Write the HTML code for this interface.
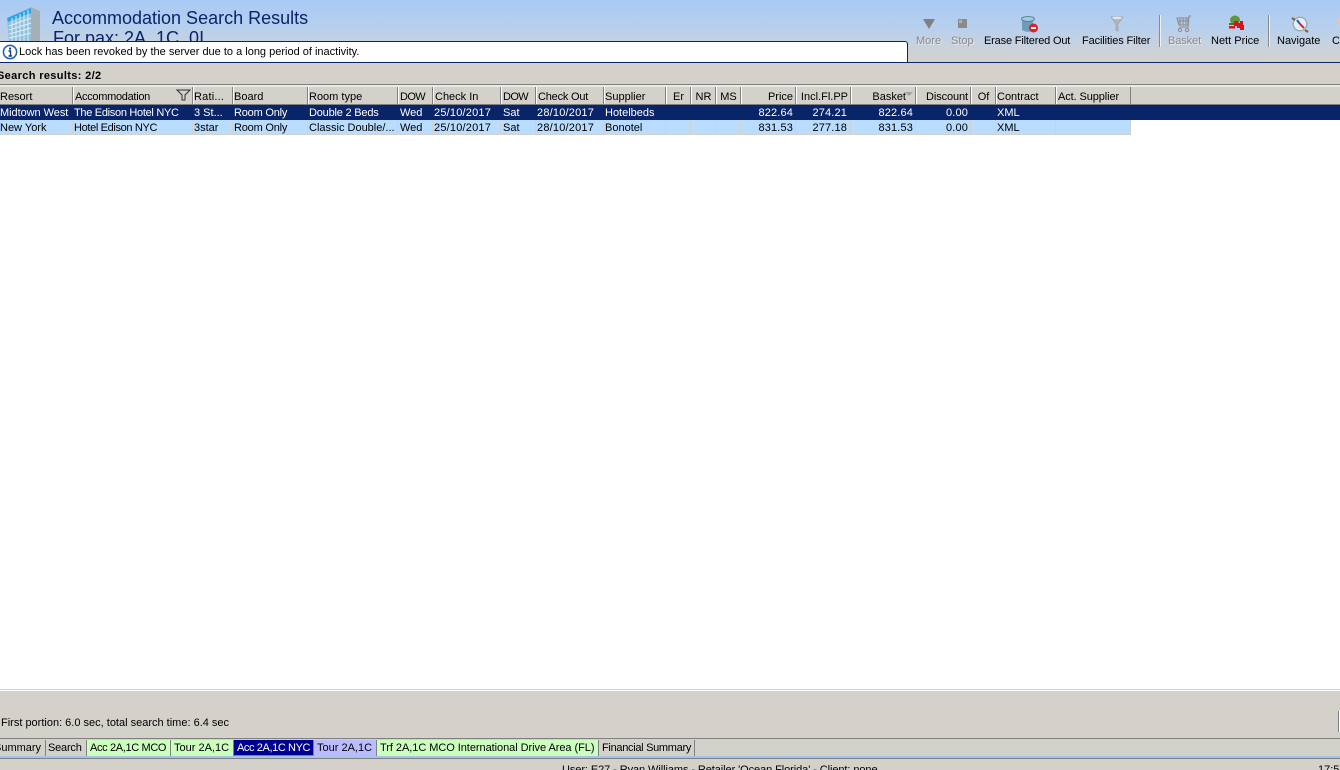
<!DOCTYPE html>
<html><head><meta charset="utf-8"><style>
html,body{margin:0;padding:0;background:#fff}
#p{position:relative;width:1340px;height:770px;overflow:hidden;background:#fff;font:11px/14px "Liberation Sans",sans-serif;color:#000;letter-spacing:0}
#p div{position:absolute}
.t{position:absolute;white-space:nowrap}
#p span.t{line-height:15px}
.h{top:87px;height:17px;background:#d4d1cb;border-right:1px solid #808080;border-left:1px solid #fff;box-sizing:border-box;line-height:20px;padding-left:0;white-space:nowrap;overflow:hidden}
.r{text-align:right;padding-right:2px;padding-left:0}
.c{text-align:center;padding:0}
.dis{color:#8a8a8a;text-shadow:1px 1px 0 #e8e8e8}
.tab{top:740px;height:16px;line-height:16px;box-sizing:border-box;white-space:nowrap;border-right:1px solid #808080;padding-left:3px;overflow:hidden}
.g{top:120px;width:1px;height:14px;background:#d4d1cb}
</style></head><body><div id="p">
<div style="left:0;top:0;width:1340px;height:62px;background:linear-gradient(#a8caf5 0,#b5cfee 25px,#c4d2e2 42px,#d4d1cb 62px)"></div>
<svg style="position:absolute;left:6px;top:6px" width="35" height="36" viewBox="0 0 35 36"><path d="M1 12L25 1V36H3z" fill="#8fc0de"/><path d="M25 1l9 4V36H25z" fill="#a4b0b8"/><path d="M1 12L25 2v5L2 16z" fill="#2aa6e6"/><g stroke="#eef6fb" stroke-width="1" opacity=".85"><path d="M6 12V36M10 10V36M14 8V36M18 6V36M22 4V36"/><path d="M3 20L25 12M3 24L25 17M3 28L25 22M3 32L25 27"/></g></svg>
<div class="t" style="left:52px;top:9px;font-size:18px;line-height:18px;color:#0a246a">Accommodation Search Results</div>
<div class="t" style="left:53px;top:29px;font-size:18px;line-height:18px;color:#0a246a">For pax: 2A, 1C, 0I</div>
<div style="left:0;top:41px;width:908px;height:21px;background:#fff;border-top:1px solid #0a246a;border-right:1px solid #0a246a;border-top-right-radius:3px;box-sizing:border-box"></div>
<svg style="position:absolute;left:2px;top:44px" width="16" height="16" viewBox="0 0 16 16"><circle cx="8" cy="8" r="6.6" fill="#fff" stroke="#1a5fa8" stroke-width="1.5"/><path d="M6.5 7h2v4.5M6.5 12h3.5" stroke="#0a3d8a" stroke-width="1.4" fill="none"/><rect x="7" y="3.6" width="2" height="2" fill="#0a3d8a"/></svg>
<div class="t" style="left:19px;top:45px">Lock has been revoked by the server due to a long period of inactivity.</div>
<div style="left:0;top:62px;width:1340px;height:1px;background:#0a246a"></div>
<div style="left:0;top:63px;width:1340px;height:21px;background:#d4d1cb"></div>
<div class="t" style="left:-3px;top:69px;font-weight:bold;letter-spacing:.35px">Search results: 2/2</div>
<div style="left:0;top:84px;width:1340px;height:1px;background:#808080"></div>
<div style="left:0;top:85px;width:1340px;height:2px;background:#ece9e2"></div>
<div style="left:0;top:87px;width:1340px;height:17px;background:#d4d1cb"></div>
<div style="left:0;top:104px;width:1340px;height:1px;background:#808080"></div>

<svg style="position:absolute;left:922px;top:18px" width="14" height="12"><path d="M1 1H13L7 11z" fill="#808080"/></svg>
<svg style="position:absolute;left:958px;top:19px" width="9" height="9"><rect width="9" height="9" fill="#8a8a8a"/><rect x="1" y="1" width="3" height="3" fill="#b0b0b0"/></svg>
<svg style="position:absolute;left:1021px;top:16px" width="18" height="17"><path d="M1 3v11q5 3 11 1V3z" fill="#6e9cba"/><ellipse cx="7" cy="3" rx="6.500" ry="2.500" fill="#a9c9dc" stroke="#5a8099"/><circle cx="12.500" cy="12" r="4.500" fill="#d8242a"/><rect x="10" y="11" width="5" height="2" fill="#fff"/></svg>
<svg style="position:absolute;left:1110px;top:16px" width="14" height="16"><path d="M1 1H13L8 8V15L6 14V8z" fill="#b4b4b4" stroke="#a0a0a0" stroke-width=".7"/><ellipse cx="7" cy="2" rx="5" ry="1.200" fill="#e4e4e4"/></svg>
<div style="left:1159px;top:15px;width:1px;height:32px;background:#8a8a8a"></div><div style="left:1160px;top:15px;width:1px;height:32px;background:#f0f0f0"></div>
<svg style="position:absolute;left:1176px;top:15px" width="17" height="18"><path d="M1 3H12V10H3z M4 3V10M7 3V10M10 3V10M2 6H12M15 1H13L12 12H3" fill="none" stroke="#8c8c8c" stroke-width="1.100"/><circle cx="4" cy="15" r="1.600" fill="none" stroke="#8c8c8c"/><circle cx="11" cy="15" r="1.600" fill="none" stroke="#8c8c8c"/></svg>
<svg style="position:absolute;left:1228px;top:15px" width="17" height="17"><ellipse cx="7" cy="5" rx="5" ry="4.500" fill="#5a9a3c"/><rect x="1" y="8" width="7" height="2" fill="#3b7a2a"/><path d="M6 6h4v2h2V6h3v4h1v5H12v-2H9v-2H6z" fill="#e0101a"/><rect x="1" y="11" width="6" height="2.500" fill="#e0101a"/></svg>
<div style="left:1268px;top:15px;width:1px;height:32px;background:#8a8a8a"></div><div style="left:1269px;top:15px;width:1px;height:32px;background:#f0f0f0"></div>
<svg style="position:absolute;left:1291px;top:15px" width="18" height="18"><circle cx="9" cy="9" r="6.800" fill="#e6eef6" stroke="#9aa8b6" stroke-width="1.400"/><path d="M6 5L9 9" stroke="#2a58b8" stroke-width="2"/><path d="M9 9L13 13" stroke="#e0242a" stroke-width="2"/><path d="M1 3l3 2M14 15l3 2" stroke="#8a5a2a" stroke-width="2"/></svg>
<div style="left:1338px;top:17px;width:2px;height:8px;background:#ecc0c0"></div>

<div class="t dis" style="left:916px;top:34px">More</div>
<div class="t dis" style="left:951px;top:34px">Stop</div>
<div class="t" style="left:984px;top:34px;letter-spacing:-.17px">Erase Filtered Out</div>
<div class="t" style="left:1082px;top:34px;letter-spacing:-.12px">Facilities Filter</div>
<div class="t dis" style="left:1168px;top:34px;letter-spacing:-.1px">Basket</div>
<div class="t" style="left:1211px;top:34px">Nett Price</div>
<div class="t" style="left:1277px;top:34px">Navigate</div>
<div class="t" style="left:1332px;top:34px">Cl</div>

<div class="h" style="left:-1px;width:74px">Resort</div>
<div class="h" style="left:73px;width:120px;letter-spacing:-.3px;padding-left:1px">Accommodation</div>
<svg style="position:absolute;left:176px;top:89px" width="15" height="12"><path d="M1 1H14L9 6V11H6V6z" fill="none" stroke="#333" stroke-width="1"/></svg>
<div class="h" style="left:193px;width:40px;letter-spacing:.2px">Rati...</div>
<div class="h" style="left:233px;width:75px">Board</div>
<div class="h" style="left:308px;width:90px">Room type</div>
<div class="h" style="left:398px;width:35px;letter-spacing:-.6px;padding-left:1px">DOW</div>
<div class="h" style="left:433px;width:68px;padding-left:1px">Check In</div>
<div class="h" style="left:501px;width:35px;letter-spacing:-.6px;padding-left:1px">DOW</div>
<div class="h" style="left:536px;width:68px;letter-spacing:-.2px;padding-left:1px">Check Out</div>
<div class="h" style="left:604px;width:62px">Supplier</div>
<div class="h c" style="left:666px;width:25px">Er</div>
<div class="h c" style="left:691px;width:25px">NR</div>
<div class="h c" style="left:716px;width:25px">MS</div>
<div class="h r" style="left:741px;width:55px">Price</div>
<div class="h r" style="left:796px;width:55px">Incl.Fl.PP</div>
<div class="h r" style="left:851px;width:65px;padding-right:9px">Basket</div>
<svg style="position:absolute;left:905px;top:92px" width="8" height="5"><path d="M0 0H8L4 4z" fill="#a0a0a0"/></svg>
<div class="h r" style="left:916px;width:55px;letter-spacing:-.1px">Discount</div>
<div class="h c" style="left:971px;width:25px">Of</div>
<div class="h" style="left:996px;width:60px">Contract</div>
<div class="h" style="left:1056px;width:75px;letter-spacing:-.1px;padding-left:1px">Act. Supplier</div>

<div style="left:0;top:105px;width:1340px;height:15px;background:#0a246a"></div>
<div style="left:0;top:120px;width:1131px;height:14px;background:#b9dcff"></div>
<div style="left:0;top:134px;width:1131px;height:1px;background:#d4d1cb"></div>
<div class="g" style="left:72px"></div><div class="g" style="left:192px"></div><div class="g" style="left:232px"></div><div class="g" style="left:307px"></div><div class="g" style="left:397px"></div><div class="g" style="left:432px"></div><div class="g" style="left:500px"></div><div class="g" style="left:535px"></div><div class="g" style="left:603px"></div><div class="g" style="left:665px"></div><div class="g" style="left:690px"></div><div class="g" style="left:715px"></div><div class="g" style="left:740px"></div><div class="g" style="left:795px"></div><div class="g" style="left:850px"></div><div class="g" style="left:915px"></div><div class="g" style="left:970px"></div><div class="g" style="left:995px"></div><div class="g" style="left:1055px"></div><div class="g" style="left:1130px"></div>

<div style="left:0;top:106px;width:1340px;height:15px;color:#fff">
<span class="t" style="left:0;top:0;letter-spacing:-.05px">Midtown West</span><span class="t" style="left:74px;top:0;letter-spacing:-.3px">The Edison Hotel NYC</span><span class="t" style="left:194px;top:0">3 St...</span><span class="t" style="left:234px;top:0;letter-spacing:-.2px">Room Only</span><span class="t" style="left:309px;top:0;letter-spacing:-.2px">Double 2 Beds</span><span class="t" style="left:400px;top:0">Wed</span><span class="t" style="left:434px;top:0;letter-spacing:.2px">25/10/2017</span><span class="t" style="left:503px;top:0">Sat</span><span class="t" style="left:537px;top:0;letter-spacing:.2px">28/10/2017</span><span class="t" style="left:605px;top:0">Hotelbeds</span><span class="t" style="right:547px;top:0;letter-spacing:.15px">822.64</span><span class="t" style="right:493px;top:0;letter-spacing:.15px">274.21</span><span class="t" style="right:427px;top:0;letter-spacing:.15px">822.64</span><span class="t" style="right:372px;top:0;letter-spacing:.15px">0.00</span><span class="t" style="left:997px;top:0">XML</span></div>
<div style="left:0;top:121px;width:1340px;height:15px">
<span class="t" style="left:0;top:0">New York</span><span class="t" style="left:74px;top:0;letter-spacing:-.35px">Hotel Edison NYC</span><span class="t" style="left:194px;top:0">3star</span><span class="t" style="left:234px;top:0;letter-spacing:-.2px">Room Only</span><span class="t" style="left:309px;top:0">Classic Double/...</span><span class="t" style="left:400px;top:0">Wed</span><span class="t" style="left:434px;top:0;letter-spacing:.2px">25/10/2017</span><span class="t" style="left:503px;top:0">Sat</span><span class="t" style="left:537px;top:0;letter-spacing:.2px">28/10/2017</span><span class="t" style="left:605px;top:0">Bonotel</span><span class="t" style="right:547px;top:0;letter-spacing:.15px">831.53</span><span class="t" style="right:493px;top:0;letter-spacing:.15px">277.18</span><span class="t" style="right:427px;top:0;letter-spacing:.15px">831.53</span><span class="t" style="right:372px;top:0;letter-spacing:.15px">0.00</span><span class="t" style="left:997px;top:0">XML</span></div>

<div style="left:0;top:689px;width:1340px;height:1px;background:#d4d1cb"></div>
<div style="left:0;top:690px;width:1340px;height:1px;background:#fff"></div>
<div style="left:0;top:691px;width:1340px;height:79px;background:#d4d1cb"></div>
<div class="t" style="left:1px;top:716px">First portion: 6.0 sec, total search time: 6.4 sec</div>
<div style="left:1338px;top:711px;width:2px;height:21px;background:#fff;border-left:1px solid #808080;box-sizing:border-box"></div>
<div style="left:0;top:738px;width:1340px;height:1px;background:#808080"></div>
<div class="tab" style="left:-9px;width:55px">Summary</div>
<div class="tab" style="left:46px;width:41px;letter-spacing:-.2px;padding-left:2px">Search</div>
<div class="tab" style="left:87px;width:84px;background:#ccffbe;letter-spacing:-.35px">Acc 2A,1C MCO</div>
<div class="tab" style="left:171px;width:63px;background:#ccffbe">Tour 2A,1C</div>
<div class="tab" style="left:234px;width:80px;background:#000090;color:#fff;border-bottom:1px solid #808080;letter-spacing:-.4px">Acc 2A,1C NYC</div>
<div class="tab" style="left:314px;width:63px;background:#bbbcff">Tour 2A,1C</div>
<div class="tab" style="left:377px;width:222px;background:#ccffbe;letter-spacing:-.05px">Trf 2A,1C MCO International Drive Area (FL)</div>
<div class="tab" style="left:599px;width:96px;letter-spacing:-.3px">Financial Summary</div>
<div style="left:0;top:756px;width:1340px;height:2px;background:#a3c4ef"></div>
<div style="left:0;top:758px;width:1340px;height:1px;background:#808080"></div>
<div class="t" style="left:562px;top:763px;letter-spacing:-.08px">User: E27 - Ryan Williams - Retailer 'Ocean Florida' - Client: none</div>
<div class="t" style="left:1318px;top:763px">17:5</div>
</div></body></html>
